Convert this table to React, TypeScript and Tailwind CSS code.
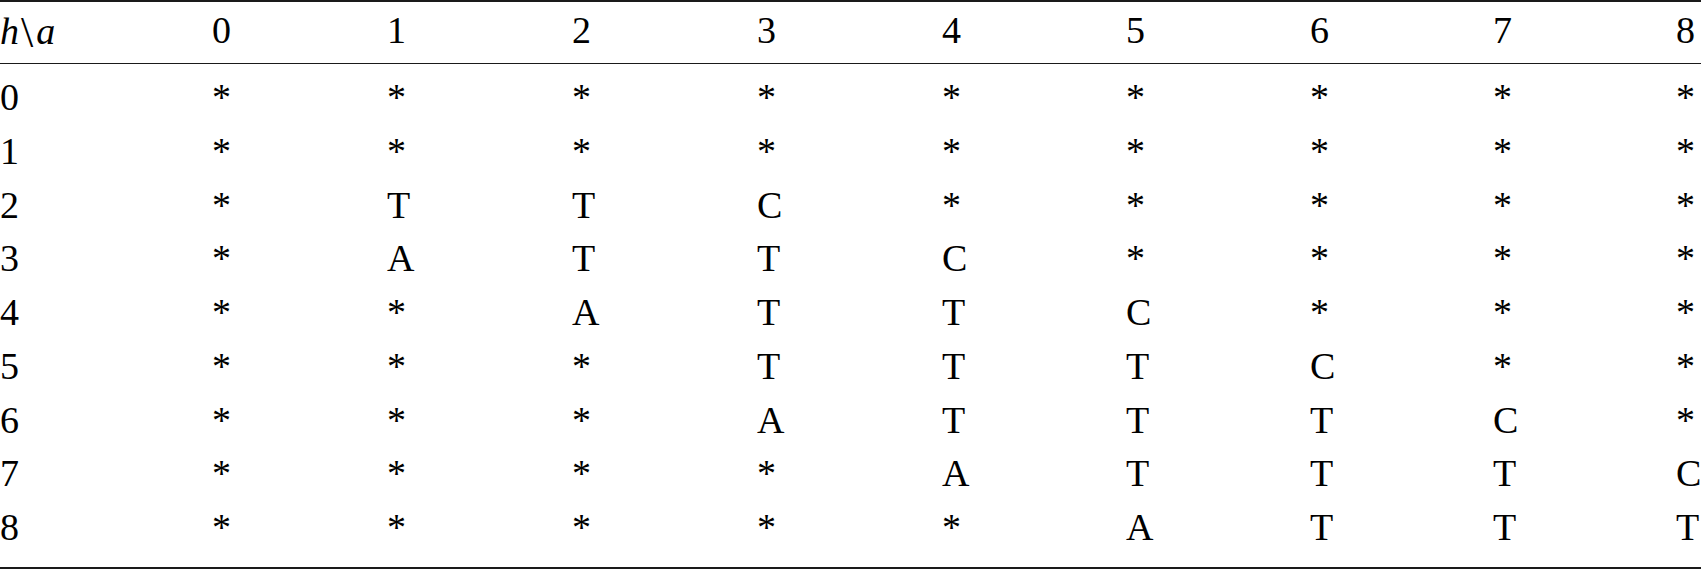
import React from "react";

const rows: string[][] = [
  ["*", "*", "*", "*", "*", "*", "*", "*", "*"],
  ["*", "*", "*", "*", "*", "*", "*", "*", "*"],
  ["*", "T", "T", "C", "*", "*", "*", "*", "*"],
  ["*", "A", "T", "T", "C", "*", "*", "*", "*"],
  ["*", "*", "A", "T", "T", "C", "*", "*", "*"],
  ["*", "*", "*", "T", "T", "T", "C", "*", "*"],
  ["*", "*", "*", "A", "T", "T", "T", "C", "*"],
  ["*", "*", "*", "*", "A", "T", "T", "T", "C"],
  ["*", "*", "*", "*", "*", "A", "T", "T", "T"],
];

const gridCols =
  "grid grid-cols-[212px_175px_185px_185px_185px_184px_184px_183px_183px_1fr]";

export default function App() {
  return (
    <div
      className="w-[1701px] h-[569px] bg-white text-black text-[38px]"
      style={{ fontFamily: '"Liberation Serif", "Times New Roman", serif' }}
    >
      <div className="border-t-2 border-b-2 border-[#1a1a1a]">
        <div className={`${gridCols} leading-[56px] pb-[4px] border-b border-[#1a1a1a]`}>
          <div>
            <span className="italic">h</span>
            <span className="inline-block ml-[2px] mr-[3px] text-[44px] leading-[56px] translate-y-[3px]">\</span>
            <span className="italic">a</span>
          </div>
          {[0, 1, 2, 3, 4, 5, 6, 7, 8].map((n) => (
            <div key={n}>{n}</div>
          ))}
        </div>
        <div className="pt-[7px] pb-[12px]">
          {rows.map((r, i) => (
            <div key={i} className={`${gridCols} h-[53.75px] leading-[53.75px]`}>
              <div>{i}</div>
              {r.map((c, j) => (
                <div key={j}>{c}</div>
              ))}
            </div>
          ))}
        </div>
      </div>
    </div>
  );
}
